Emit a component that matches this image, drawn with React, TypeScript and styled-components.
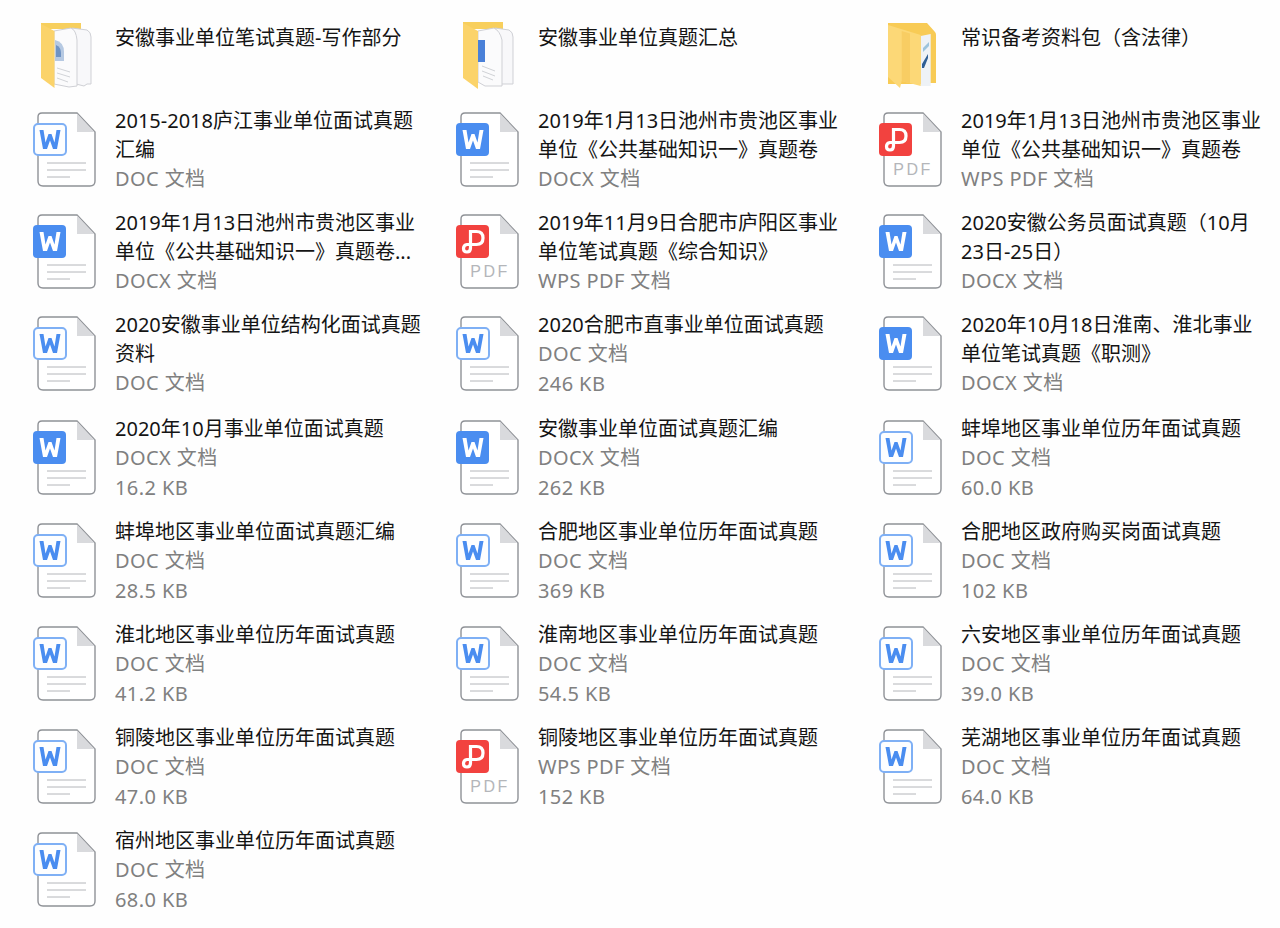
import React from "react";
import styled, { createGlobalStyle } from "styled-components";

type Kind = "folderA" | "folderB" | "folderC" | "doc" | "docx" | "pdf";

interface Item {
  kind: Kind;
  title: string;
  type?: string;
  size?: string;
}

const BLUE = "#4a8df0";
const RED = "#f2423f";

const rows: Item[][] = [
  [
    { kind: "folderA", title: "安徽事业单位笔试真题-写作部分" },
    { kind: "folderB", title: "安徽事业单位真题汇总" },
    { kind: "folderC", title: "常识备考资料包（含法律）" },
  ],
  [
    { kind: "doc", title: "2015-2018庐江事业单位面试真题\n汇编", type: "DOC 文档" },
    { kind: "docx", title: "2019年1月13日池州市贵池区事业\n单位《公共基础知识一》真题卷", type: "DOCX 文档" },
    { kind: "pdf", title: "2019年1月13日池州市贵池区事业\n单位《公共基础知识一》真题卷", type: "WPS PDF 文档" },
  ],
  [
    { kind: "docx", title: "2019年1月13日池州市贵池区事业\n单位《公共基础知识一》真题卷...", type: "DOCX 文档" },
    { kind: "pdf", title: "2019年11月9日合肥市庐阳区事业\n单位笔试真题《综合知识》", type: "WPS PDF 文档" },
    { kind: "docx", title: "2020安徽公务员面试真题（10月\n23日-25日）", type: "DOCX 文档" },
  ],
  [
    { kind: "doc", title: "2020安徽事业单位结构化面试真题\n资料", type: "DOC 文档" },
    { kind: "doc", title: "2020合肥市直事业单位面试真题", type: "DOC 文档", size: "246 KB" },
    { kind: "docx", title: "2020年10月18日淮南、淮北事业\n单位笔试真题《职测》", type: "DOCX 文档" },
  ],
  [
    { kind: "docx", title: "2020年10月事业单位面试真题", type: "DOCX 文档", size: "16.2 KB" },
    { kind: "docx", title: "安徽事业单位面试真题汇编", type: "DOCX 文档", size: "262 KB" },
    { kind: "doc", title: "蚌埠地区事业单位历年面试真题", type: "DOC 文档", size: "60.0 KB" },
  ],
  [
    { kind: "doc", title: "蚌埠地区事业单位面试真题汇编", type: "DOC 文档", size: "28.5 KB" },
    { kind: "doc", title: "合肥地区事业单位历年面试真题", type: "DOC 文档", size: "369 KB" },
    { kind: "doc", title: "合肥地区政府购买岗面试真题", type: "DOC 文档", size: "102 KB" },
  ],
  [
    { kind: "doc", title: "淮北地区事业单位历年面试真题", type: "DOC 文档", size: "41.2 KB" },
    { kind: "doc", title: "淮南地区事业单位历年面试真题", type: "DOC 文档", size: "54.5 KB" },
    { kind: "doc", title: "六安地区事业单位历年面试真题", type: "DOC 文档", size: "39.0 KB" },
  ],
  [
    { kind: "doc", title: "铜陵地区事业单位历年面试真题", type: "DOC 文档", size: "47.0 KB" },
    { kind: "pdf", title: "铜陵地区事业单位历年面试真题", type: "WPS PDF 文档", size: "152 KB" },
    { kind: "doc", title: "芜湖地区事业单位历年面试真题", type: "DOC 文档", size: "64.0 KB" },
  ],
  [{ kind: "doc", title: "宿州地区事业单位历年面试真题", type: "DOC 文档", size: "68.0 KB" }],
];

const Page: React.FC = () => (
  <g>
    <path
      d="M12 3H47L65 22V71Q65 76 60 76H13Q8 76 8 71V7Q8 3 12 3Z"
      fill="#fff"
      stroke="#8f9297"
      strokeWidth="1.4"
    />
    <path d="M47 3.5V22H64.5Z" fill="#d9dadd" />
  </g>
);

const WordIcon: React.FC<{ solid: boolean }> = ({ solid }) => (
  <svg width="66" height="78" viewBox="0 0 66 78">
    <Page />
    <path d="M17 53H56M17 60H56M17 67H40" stroke="#b4b6ba" strokeWidth="1" />
    <rect
      x={solid ? 3 : 4}
      y={solid ? 13 : 14}
      width={solid ? 33 : 32}
      height={solid ? 33 : 31}
      rx="4"
      fill={solid ? BLUE : "#fdfeff"}
      stroke={solid ? "none" : "#7fb0f5"}
      strokeWidth="2"
    />
    <path
      d="M9.5 20H13.5L15.5 32.5L18.5 24H21.5L24.5 32.5L26.5 20H30.5L27 39H23L20 30.5L17 39H13Z"
      fill={solid ? "#fff" : BLUE}
    />
  </svg>
);

const PdfIcon: React.FC = () => (
  <svg width="66" height="78" viewBox="0 0 66 78">
    <Page />
    <text
      x="37"
      y="65"
      textAnchor="middle"
      fontFamily="Liberation Sans, sans-serif"
      fontSize="16"
      fontWeight="300"
      letterSpacing="2.5"
      fill="#b4b6ba"
    >
      PDF
    </text>
    <rect x="3" y="13" width="33" height="33" rx="4" fill={RED} />
    <path
      d="M17.5 19.5H23.5Q30 19.5 30 26Q30 32.5 23.5 32.5H14Q10.5 33 10.5 36.5Q10.5 40 14 40Q17.5 40 17.5 36V19.5Z"
      fill="none"
      stroke="#fff"
      strokeWidth="3.2"
    />
  </svg>
);

const FolderA: React.FC = () => (
  <svg width="66" height="78" viewBox="0 0 66 78">
    <path d="M11 5H51V11H11Z" fill="#f7cf5d" />
    <path d="M42 10L57 12Q61 14 61 19V66H57L54 68L46 66Z" fill="#f8f8fa" stroke="#cfd0d5" />
    <path d="M24 13L41 10Q46 12 47 22V68L39 69L24 66Z" fill="#fbfbfc" stroke="#cfd0d5" />
    <path d="M25 22Q34 24 34 34V43H25Z" fill="#b6c9e2" />
    <path d="M26 27Q31 29 31 35V39H26Z" fill="#6f93c4" />
    <path d="M27 50L40 54M27 55L40 59M27 60L38 64" stroke="#d2d4d8" />
    <path d="M11 6L24.5 13V70L11 60Z" fill="#fbd36a" />
  </svg>
);

const FolderB: React.FC = () => (
  <svg width="66" height="78" viewBox="0 0 66 78">
    <path d="M10 4H50V11H10Z" fill="#f8cf5c" />
    <path d="M42 10L56 12Q60 14 60 19V66H46Z" fill="#f8f8fa" stroke="#cfd0d5" />
    <path d="M25 13L41 10Q47 13 49 22V68L32 68L25 64Z" fill="#fbfbfc" stroke="#cfd0d5" />
    <path d="M25 22H32V44H25Z" fill="#4a80d8" />
    <path d="M29 48L42 53M29 53L42 58M30 58L40 62" stroke="#d0d2d6" />
    <path d="M10 5L25 13V71L10 60Z" fill="#fbd36a" />
  </svg>
);

const FolderC: React.FC = () => (
  <svg width="66" height="78" viewBox="0 0 66 78">
    <path d="M12 5H51L59 14Q60 15 60 17V65H54V66H12Z" fill="#f8cb55" />
    <path d="M44.7 18L54.7 16V68H44.7Z" fill="#eef2f6" />
    <path d="M47 30L53 24V28L47 34Z" fill="#9cc4dd" />
    <path d="M46 46L52 36V40L48 50H46Z" fill="#2f5f95" />
    <path d="M12 7L44.7 17V68L25.7 63L24 70L12 59Z" fill="#fcd877" />
    <path d="M25.7 13L34 15.5V65.5L25.7 63Z" fill="#f8cd63" />
  </svg>
);

const FileIcon: React.FC<{ kind: Kind }> = ({ kind }) => {
  switch (kind) {
    case "folderA":
      return <FolderA />;
    case "folderB":
      return <FolderB />;
    case "folderC":
      return <FolderC />;
    case "pdf":
      return <PdfIcon />;
    default:
      return <WordIcon solid={kind === "docx"} />;
  }
};

export default function App() {
  return (
    <>
      <GlobalStyle />
      <Grid>
        {rows.flat().map((item, i) => {
          const isFolder = item.kind.startsWith("folder");
          return (
            <Cell key={i}>
              <IconSlot $folder={isFolder}>
                <FileIcon kind={item.kind} />
              </IconSlot>
              <Info $folder={isFolder}>
                <Title>{item.title}</Title>
                {item.type && <Meta>{item.type}</Meta>}
                {item.size && <Meta>{item.size}</Meta>}
              </Info>
            </Cell>
          );
        })}
      </Grid>
    </>
  );
}

const GlobalStyle = createGlobalStyle`
  html, body {
    margin: 0;
    background: #fefefe;
    font-family: "Noto Sans", "Noto Sans CJK SC", sans-serif;
  }
`;

const Grid = styled.div`
  display: grid;
  grid-template-columns: repeat(3, 423px);
  grid-template-rows: 103px 102px 102px 104px repeat(4, 103px) 98px;
  width: 1280px;
  height: 928px;
  padding-left: 30px;
  box-sizing: border-box;
`;

const Cell = styled.div`
  display: flex;
  gap: 19px;
  align-items: flex-start;
`;

const IconSlot = styled.div<{ $folder: boolean }>`
  flex: none;
  width: 66px;
  height: 78px;
  padding-top: ${(p) => (p.$folder ? 18 : 7)}px;

  svg {
    display: block;
  }
`;

const Info = styled.div<{ $folder: boolean }>`
  padding-top: ${(p) => (p.$folder ? 23 : 3)}px;
`;

const Title = styled.div`
  font-size: 20px;
  line-height: 29px;
  color: #141414;
  white-space: pre-line;
`;

const Meta = styled.div`
  font-size: 20px;
  line-height: 30px;
  color: #808080;
  letter-spacing: 0.4px;
`;
